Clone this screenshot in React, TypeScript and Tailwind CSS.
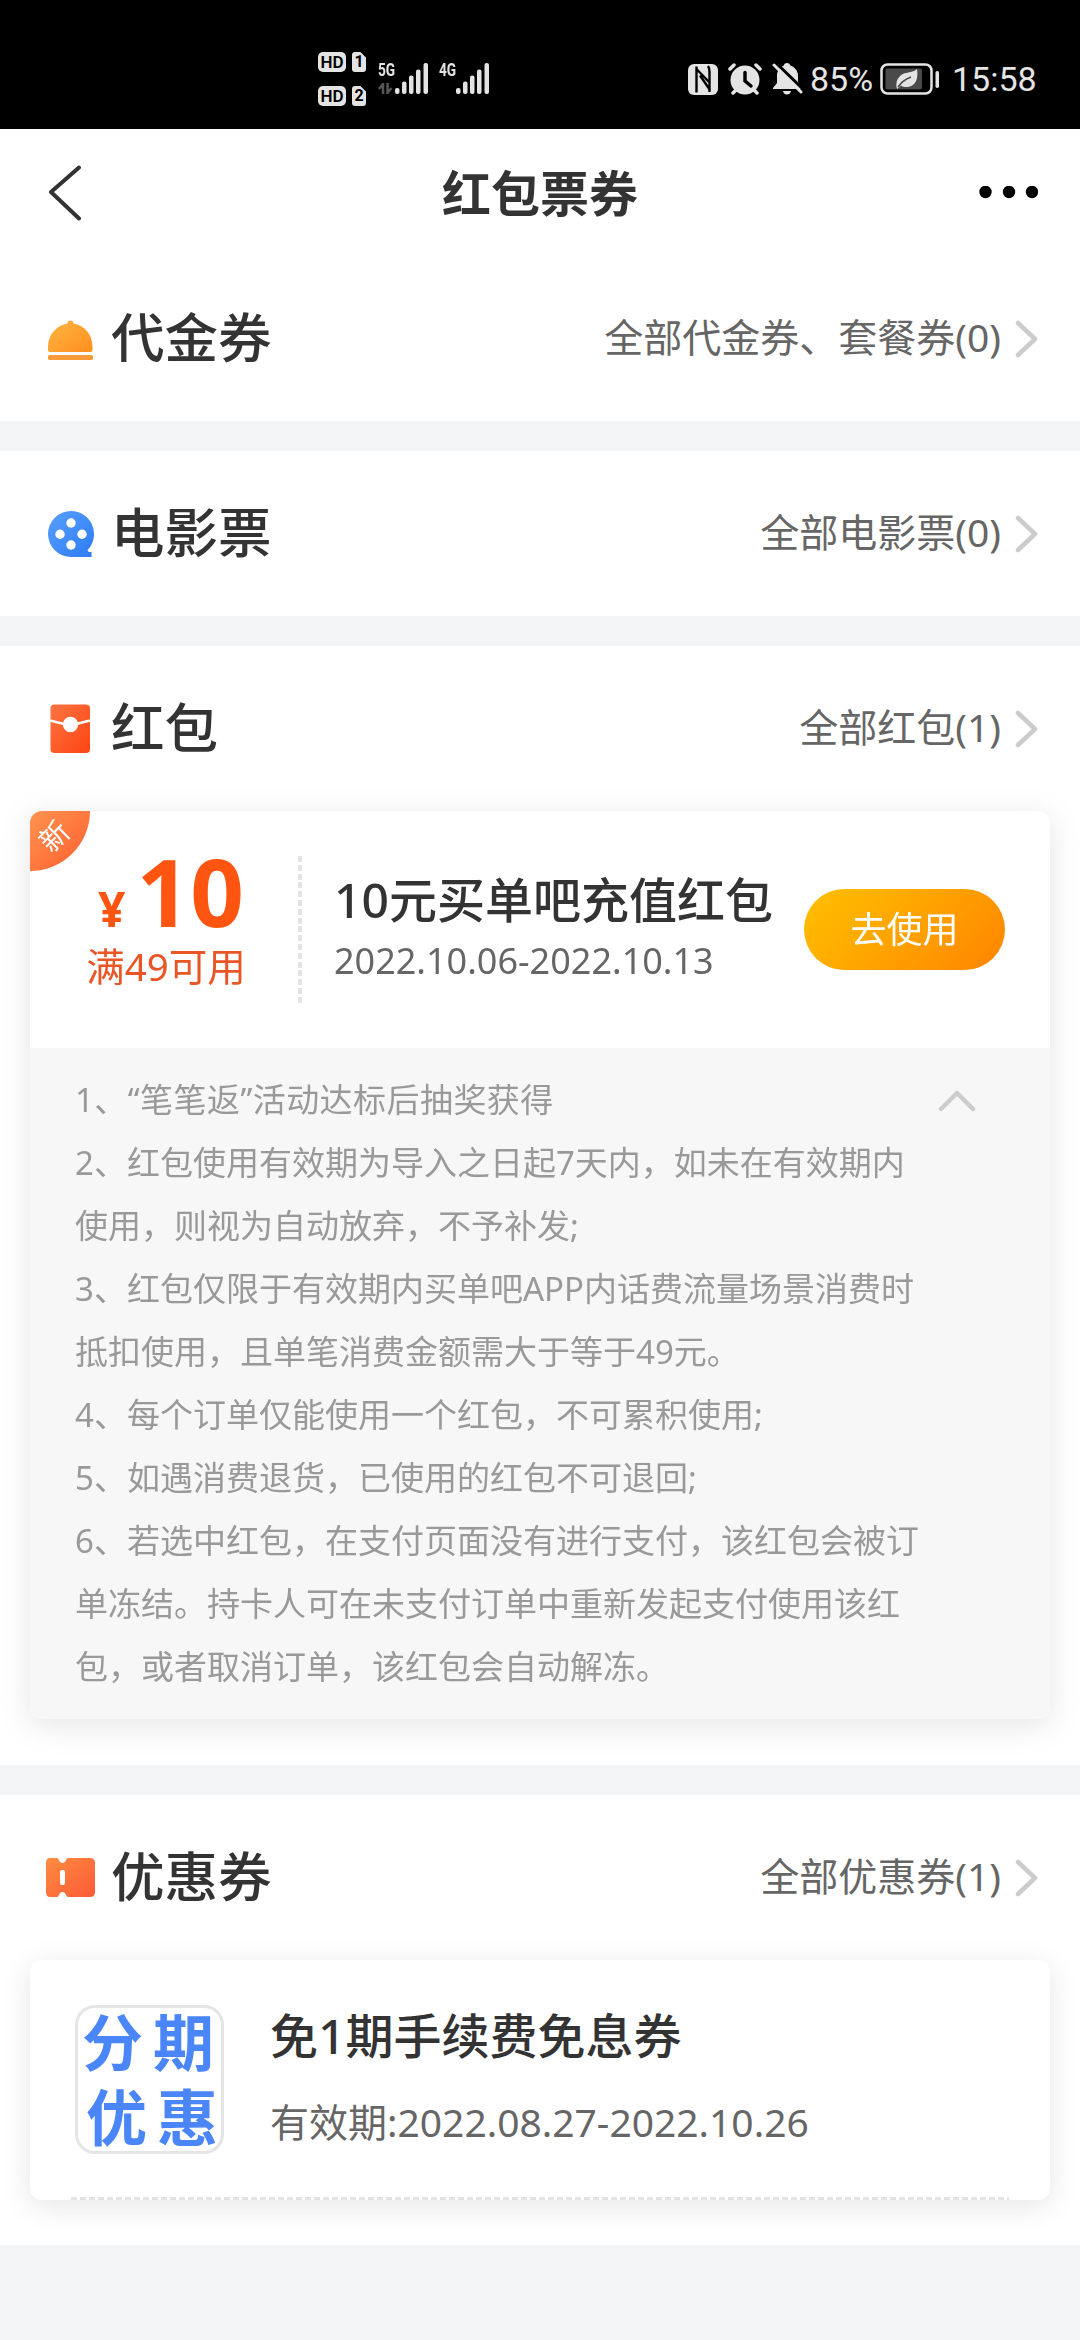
import type { ReactNode } from 'react'

const rules = [
  '1、“笔笔返”活动达标后抽奖获得',
  '2、红包使用有效期为导入之日起7天内，如未在有效期内',
  '使用，则视为自动放弃，不予补发;',
  '3、红包仅限于有效期内买单吧APP内话费流量场景消费时',
  '抵扣使用，且单笔消费金额需大于等于49元。',
  '4、每个订单仅能使用一个红包，不可累积使用;',
  '5、如遇消费退货，已使用的红包不可退回;',
  '6、若选中红包，在支付页面没有进行支付，该红包会被订',
  '单冻结。持卡人可在未支付订单中重新发起支付使用该红',
  '包，或者取消订单，该红包会自动解冻。',
]

function HdBadge({ sim }: { sim: string }) {
  return (
    <div className="flex gap-[6px]">
      <span className="flex h-5 w-7 items-center justify-center rounded-[5px] bg-[#e4e4e4] text-[17px] font-semibold leading-none text-black">
        HD
      </span>
      <span className="flex h-5 w-[14px] items-center justify-center rounded-[3px] bg-[#e4e4e4] text-[16px] font-bold leading-none text-black [clip-path:polygon(0_0,60%_0,100%_28%,100%_100%,0_100%)]">
        {sim}
      </span>
    </div>
  )
}

function Bars() {
  return (
    <svg width="33" height="31" viewBox="0 0 33 31" fill="#e4e4e4">
      <rect x="0" y="25" width="4.500" height="6" rx="2" />
      <rect x="7" y="18.500" width="4.500" height="12.500" rx="2" />
      <rect x="14" y="12.500" width="4.500" height="18.500" rx="2" />
      <rect x="21" y="6.500" width="4.500" height="24.500" rx="2" />
      <rect x="28.500" y="0" width="4.500" height="31" rx="2" />
    </svg>
  )
}

function StatusBar() {
  return (
    <div className="flex h-[129px] items-start justify-between bg-black font-[Roboto,sans-serif] text-[#e4e4e4]">
      <div className="flex pl-[318px] pt-[52px]">
        <div className="flex w-12 flex-col gap-[14px]">
          <HdBadge sim="1" />
          <HdBadge sim="2" />
        </div>
        <div className="ml-3 mt-[11px] flex items-start">
          <div className="flex w-[17px] flex-col gap-[6px]">
            <span className="origin-left scale-x-[0.72] text-[19px] font-bold leading-[14px]">5G</span>
            <svg width="15" height="11" viewBox="0 0 15 11" fill="none" stroke="#555" strokeWidth="2.500">
              <path d="M5 11V1L1 6M9.500 0v10l4-5" />
            </svg>
          </div>
          <Bars />
        </div>
        <div className="ml-[11px] mt-[11px] flex items-start">
          <span className="w-[17px] origin-left scale-x-[0.72] text-[19px] font-bold leading-[14px]">4G</span>
          <Bars />
        </div>
      </div>
      <div className="mt-[63px] flex h-8 items-center pr-[42px]">
        <svg width="30" height="31" viewBox="0 0 30 31">
          <rect width="30" height="31" rx="6" fill="#e4e4e4" />
          <path d="M8.500 2.500v26M8 4.500l13 13.500M12 11.500l10 14.500M21.500 28V8q0-4-1.500-6" fill="none" stroke="#000" strokeWidth="2.400" />
        </svg>
        <svg className="ml-[10px]" width="34" height="32" viewBox="0 0 34 32">
          <g stroke="#e4e4e4" strokeWidth="3.500" strokeLinecap="round">
            <path d="M2 6l4-4M32 6l-4-4M5 30l3-3M29 30l-3-3" />
          </g>
          <circle cx="17" cy="17" r="14.500" fill="#e4e4e4" />
          <path d="M17 9.500v8.500l6 5" fill="none" stroke="#000" strokeWidth="3.500" strokeLinecap="round" />
        </svg>
        <svg className="ml-[10px]" width="31" height="32" viewBox="0 0 31 32">
          <path
            d="M15 0c1.800 0 3 1 3.300 2.600C23 4.200 26 8 26 13v6l3 6v1H1v-1l4-5v-7C5 8 8 4 11.800 2.600 12 1 13.200 0 15 0zM11 28h8c-.5 2.500-2 3.500-4 3.500S11.500 30.500 11 28z"
            fill="#e4e4e4"
          />
          <path d="M3-1l30 29" stroke="#000" strokeWidth="3" />
          <path d="M2 2l27 27" stroke="#e4e4e4" strokeWidth="3" strokeLinecap="round" />
        </svg>
        <span className="ml-[7px] w-[65px] text-[34px] leading-8">85%</span>
        <svg className="ml-[5px]" width="60" height="32" viewBox="0 0 60 32">
          <rect x="1.500" y="1.500" width="50" height="29" rx="6" fill="none" stroke="#e4e4e4" strokeWidth="2.500" />
          <rect x="5.500" y="5.500" width="36.500" height="21" rx="2" fill="#4a4a4a" />
          <path d="M37 6c1.500 9-1 17-9 18-3 .4-5-.3-7-1.500l-4 3.500C15 19 18 13 24 10.500 29 9 33 9.500 37 6z" fill="#e4e4e4" />
          <path d="M18 24c4-6 8-8 13-10" fill="none" stroke="#4a4a4a" strokeWidth="1.500" />
          <rect x="55.500" y="8" width="3.500" height="17" rx="1.700" fill="#e4e4e4" />
        </svg>
        <span className="ml-3 w-[86px] text-[34px] leading-8">15:58</span>
      </div>
    </div>
  )
}

function NavBar() {
  return (
    <header className="flex h-[127px] items-center justify-between pl-[46px] pr-[42px]">
      <svg width="56" height="56" viewBox="0 0 56 56" fill="none" stroke="#333" strokeWidth="4" strokeLinecap="round" strokeLinejoin="round">
        <path d="M33 2.500L5 27l28 26.500" />
      </svg>
      <h1 className="pt-[2px] text-[49px] font-bold leading-none text-[#333]">红包票券</h1>
      <svg width="60" height="14" viewBox="0 0 60 14">
        <circle cx="7.500" cy="6" r="6.200" />
        <circle cx="31" cy="6" r="6.200" />
        <circle cx="54" cy="6" r="6.200" />
      </svg>
    </header>
  )
}

function VoucherIcon() {
  return (
    <svg width="50" height="50" viewBox="0 0 50 50">
      <defs>
        <linearGradient id="voucher" x1="0" y1="0" x2="1" y2="1">
          <stop offset="0" stopColor="#ffb545" />
          <stop offset="1" stopColor="#ff8f1c" />
        </linearGradient>
      </defs>
      <path
        d="M22.500 9.500a3 3 0 0 1 6 0C39 11 47.500 20 47.500 33v3q0 2-2 2H5q-2 0-2-2v-3C3 20 12 11 22.500 9.500z"
        fill="url(#voucher)"
      />
      <rect x="3" y="41" width="45" height="5" rx="1.800" fill="#f89a38" />
    </svg>
  )
}

function MovieIcon() {
  return (
    <svg width="50" height="50" viewBox="0 0 50 50">
      <defs>
        <linearGradient id="movie" x1="0" y1="0" x2="1" y2="1">
          <stop offset="0" stopColor="#58a0fb" />
          <stop offset="1" stopColor="#2d7bf6" />
        </linearGradient>
      </defs>
      <path d="M26 2a23 23 0 0 1 17 38.500q-1 1.500 1 2.500h2.500v5H26A23 23 0 0 1 26 2z" fill="url(#movie)" />
      <g fill="#fff">
        <circle cx="26" cy="14" r="4.700" />
        <circle cx="15" cy="25.300" r="4.700" />
        <circle cx="37" cy="25.300" r="4.700" />
        <circle cx="26" cy="36" r="4.700" />
      </g>
    </svg>
  )
}

function PacketIcon() {
  return (
    <svg width="50" height="50" viewBox="0 0 50 50">
      <defs>
        <linearGradient id="packet" x1="0" y1="0" x2="1" y2="1">
          <stop offset="0" stopColor="#fb7542" />
          <stop offset="1" stopColor="#ff4413" />
        </linearGradient>
      </defs>
      <rect x="5.500" y="0.500" width="39.500" height="48.500" rx="4" fill="url(#packet)" />
      <path d="M5 16.500l20 5 20-5" fill="none" stroke="#fff" strokeWidth="2.400" />
      <circle cx="25.500" cy="20.500" r="7.700" fill="#fff" />
    </svg>
  )
}

function CouponIcon() {
  return (
    <svg width="50" height="50" viewBox="0 0 50 50">
      <defs>
        <linearGradient id="coupon" x1="0" y1="0" x2="1" y2="1">
          <stop offset="0" stopColor="#ff8c40" />
          <stop offset="1" stopColor="#fd5a36" />
        </linearGradient>
      </defs>
      <path
        d="M5 5h7c2 0 2 5 5.500 5S21 5 23 5h22q5 0 5 5v29q0 5-5 5H23c-2 0-2-5-5.500-5S14 44 12 44H5q-4 0-4-5V10q0-5 4-5z"
        fill="url(#coupon)"
      />
      <rect x="15" y="17" width="5" height="15" rx="2" fill="#fff" />
    </svg>
  )
}

interface SectionHeaderProps {
  icon: ReactNode
  title: string
  link: string
}

function SectionHeader({ icon, title, link }: SectionHeaderProps) {
  return (
    <div className="flex h-[165px] items-center justify-between pl-[45px] pr-[42px]">
      <div className="flex items-center gap-[16px]">
        {icon}
        <h2 className="pb-[2px] text-[53.5px] font-medium leading-none text-[#333]">{title}</h2>
      </div>
      <div className="flex items-center gap-[14px]">
        <span className="pb-[5px] text-[39px] leading-none text-[#666]">{link}</span>
        <svg width="23" height="38" viewBox="0 0 23 38" fill="none" stroke="#ccc" strokeWidth="4.500" strokeLinecap="round" strokeLinejoin="round">
          <path d="M3 3l17 16L3 35" />
        </svg>
      </div>
    </div>
  )
}

function RedPacketCard() {
  return (
    <div className="relative mx-[30px] h-[908px] overflow-hidden rounded-[12px] bg-white">
      <div className="absolute left-0 top-0 flex h-[60px] w-[60px] items-center justify-center rounded-br-[60px] bg-linear-135 from-[#ff9350] to-[#ff5a2c]">
        <span className="mb-3 mr-3 -rotate-45 text-[29px] leading-none text-white">新</span>
      </div>
      <div className="flex h-[237px] items-center">
        <div className="flex h-full w-[268px] flex-col items-center pl-1 pt-[46px]">
          <div className="flex h-[68px] items-baseline gap-[11px] pl-[10px] font-bold leading-[68px] text-[#ff5510]">
            <span className="text-[48px]">¥</span>
            <span className="text-[94px]">10</span>
          </div>
          <span className="mt-[16px] text-[38.5px] leading-[50px] text-[#ea5526]">满49可用</span>
        </div>
        <div className="h-[147px] w-1 bg-[repeating-linear-gradient(180deg,#e4e4e4_0_6px,#ffffff_6px_8.800px)]" />
        <div className="ml-[32px] flex w-[470px] flex-col">
          <h3 className="whitespace-nowrap text-[48px] font-medium leading-[58px] text-[#333]">10元买单吧充值红包</h3>
          <p className="mt-[4px] whitespace-nowrap text-[36px] leading-[56px] text-[#666]">2022.10.06-2022.10.13</p>
        </div>
        <button
          type="button"
          className="h-[81px] w-[201px] rounded-full bg-linear-135 from-[#ffc000] to-[#ff8400] text-[36px] text-white"
        >
          去使用
        </button>
      </div>
      <div className="flex h-[671px] items-start justify-between bg-[#f7f7f7] pl-[45px] pr-[74px] pt-[20px]">
        <div className="text-[33px] leading-[63px] text-[#999]">
          {rules.map((line) => (
            <p key={line} className="whitespace-nowrap first:tracking-[0.45px]">
              {line}
            </p>
          ))}
        </div>
        <svg className="mt-[21px]" width="38" height="24" viewBox="0 0 38 24" fill="none" stroke="#ccc" strokeWidth="4.500" strokeLinecap="round" strokeLinejoin="round">
          <path d="M3 20L19 4l16 16" />
        </svg>
      </div>
    </div>
  )
}

function CouponCard() {
  return (
    <div className="mx-[30px] flex h-[240px] flex-col justify-between rounded-[12px] bg-white shadow-[0_6px_30px_rgba(0,0,0,0.1)]">
      <div className="flex pl-[45px] pt-[45px]">
        <div className="h-[149px] w-[149px] rounded-[20px] border-3 border-[#e5e5e5] font-bold text-[#4a86f7]">
          <div className="flex h-[72px] gap-[10px] pl-[4px] text-[61px] leading-[70px]">
            <span>分</span>
            <span>期</span>
          </div>
          <div className="flex gap-[10px] pl-[8px] text-[61px] leading-[75px]">
            <span>优</span>
            <span>惠</span>
          </div>
        </div>
        <div className="ml-[46px]">
          <h3 className="text-[48px] font-medium leading-[62px] text-[#333]">免1期手续费免息券</h3>
          <p className="mt-[25px] text-[39px] leading-[60px] text-[#666]">有效期:2022.08.27-2022.10.26</p>
        </div>
      </div>
      <div className="mx-[41px] h-[3px] bg-[repeating-linear-gradient(90deg,#e4e4e4_0_6px,#ffffff_6px_9px)]" />
    </div>
  )
}

export default function App() {
  return (
    <main className="flex h-[2340px] w-[1080px] flex-col gap-[30px] overflow-hidden bg-[#f4f5f7] font-['Noto_Sans','Noto_Sans_CJK_SC',sans-serif]">
      <div className="bg-white">
        <StatusBar />
        <NavBar />
        <SectionHeader icon={<VoucherIcon />} title="代金券" link="全部代金券、套餐券(0)" />
      </div>
      <section className="bg-white">
        <SectionHeader icon={<MovieIcon />} title="电影票" link="全部电影票(0)" />
      </section>
      <section className="bg-white pb-[46px]">
        <SectionHeader icon={<PacketIcon />} title="红包" link="全部红包(1)" />
        <div className="[filter:drop-shadow(0_6px_15px_rgba(0,0,0,0.1))]">
          <RedPacketCard />
        </div>
      </section>
      <section className="bg-white pb-[45px]">
        <SectionHeader icon={<CouponIcon />} title="优惠券" link="全部优惠券(1)" />
        <CouponCard />
      </section>
    </main>
  )
}
